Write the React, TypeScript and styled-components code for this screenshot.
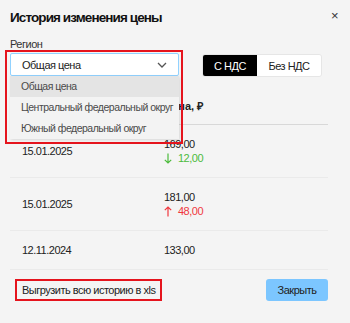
import styled, { createGlobalStyle } from 'styled-components';

const GlobalStyle = createGlobalStyle`
  body {
    margin: 0;
    background: #f4f4f4;
    font-family: "Liberation Sans", Arial, sans-serif;
    letter-spacing: -0.5px;
    color: #222;
  }
`;

const Modal = styled.div`
  width: 350px;
  height: 323px;
  box-sizing: border-box;
  padding: 0 22px 0 10px;
  background: #f4f4f4;
  overflow: hidden;
`;

const Header = styled.div`
  display: flex;
  justify-content: space-between;
  align-items: flex-start;
  margin-right: -10px;
  padding-top: 8px;

  h2 {
    margin: 0;
    font-size: 13.5px;
    letter-spacing: -0.9px;
    line-height: 20px;
    font-weight: 700;
    color: #111;
  }
`;

const CloseIcon = styled.span`
  font-size: 13px;
  line-height: 14px;
  color: #333;
  margin-top: 1px;
`;

const Label = styled.div`
  margin-top: 10px;
  font-size: 11px;
  line-height: 13px;
  color: #333;
`;

const Controls = styled.div`
  display: flex;
  align-items: flex-start;
  margin-top: 2px;
`;

const SelectWrap = styled.div`
  position: relative;
  width: 169px;

  &::after {
    content: '';
    position: absolute;
    left: -5px;
    top: -3px;
    right: -4px;
    bottom: -68px;
    border: 2px solid #e5141d;
    pointer-events: none;
    z-index: 3;
  }
`;

const SelectBox = styled.div`
  height: 23px;
  box-sizing: border-box;
  border: 1px solid #91d2ff;
  border-radius: 2px;
  background: #fff;
  display: flex;
  align-items: center;
  justify-content: space-between;
  padding: 0 11px;
  font-size: 11px;
  color: #222;
`;

const Dropdown = styled.ul`
  position: absolute;
  top: 100%;
  left: 0;
  width: 100%;
  margin: 0;
  padding: 0;
  list-style: none;
  background: #f3f3f3;
  box-shadow: 1px 1px 3px rgba(0, 0, 0, 0.12);
  z-index: 2;
`;

const Option = styled.li<{ $active?: boolean }>`
  height: 21px;
  line-height: 21px;
  padding-left: 11px;
  font-size: 10.5px;
  color: #4a4a4a;
  white-space: nowrap;
  background: ${({ $active }) => ($active ? '#e4e4e4' : 'transparent')};
`;

const Toggle = styled.div`
  display: flex;
  margin-left: 23px;
  margin-top: 1px;
  border-radius: 3px;
  overflow: hidden;
  border: 1px solid #e6e6e6;
`;

const ToggleBtn = styled.div<{ $on?: boolean; $w: number }>`
  width: ${({ $w }) => $w}px;
  height: 21px;
  display: flex;
  align-items: center;
  justify-content: center;
  font-size: 11px;
  background: ${({ $on }) => ($on ? '#000' : '#fff')};
  color: ${({ $on }) => ($on ? '#fff' : '#222')};
`;

const Table = styled.div`
  margin-top: 11px;
`;

const Row = styled.div<{ $head?: boolean }>`
  display: grid;
  grid-template-columns: 154px 1fr;
  align-items: center;
  padding: ${({ $head }) => ($head ? '11px 0' : '12px 0')};
  border-bottom: 1px solid ${({ $head }) => ($head ? '#d8d8d8' : '#eaeaea')};
  font-size: 11px;
  line-height: 14px;
  color: #222;

  > div:first-child {
    padding-left: 12px;
  }
`;

const HeadCell = styled.div`
  font-size: 11px;
  font-weight: 700;
  letter-spacing: 0;
`;

const Delta = styled.div<{ $up?: boolean }>`
  color: ${({ $up }) => ($up ? '#f0383e' : '#4cbb3c')};
  display: flex;
  align-items: center;
  gap: 6px;
`;

const Footer = styled.div`
  display: flex;
  justify-content: space-between;
  margin-top: 9px;
`;

const ExportBtn = styled.div`
  margin-left: 5px;
  height: 22px;
  box-sizing: border-box;
  border: 2px solid #e5141d;
  padding: 0 5px;
  display: flex;
  align-items: center;
  font-size: 11px;
  color: #222;
`;

const CloseBtn = styled.div`
  width: 62px;
  height: 22px;
  border-radius: 3px;
  background: #7cc6ff;
  display: flex;
  align-items: center;
  justify-content: center;
  font-size: 11px;
  color: #222;
`;

const Chevron = () => (
  <svg width="10" height="6" viewBox="0 0 10 6">
    <path d="M1 1l4 4 4-4" fill="none" stroke="#555" strokeWidth="1.3" />
  </svg>
);

const Arrow = ({ up }: { up?: boolean }) => (
  <svg width="8" height="11" viewBox="0 0 8 11">
    {up ? (
      <path d="M4 10.5V1M0.8 4.2L4 1l3.2 3.2" fill="none" stroke="currentColor" strokeWidth="1.2" />
    ) : (
      <path d="M4 0.5V10M0.8 6.8L4 10l3.2-3.2" fill="none" stroke="currentColor" strokeWidth="1.2" />
    )}
  </svg>
);

const rows = [
  { date: '15.01.2025', price: '169,00', delta: '12,00', up: false },
  { date: '15.01.2025', price: '181,00', delta: '48,00', up: true },
  { date: '12.11.2024', price: '133,00' },
];

const App = () => (
  <Modal>
    <GlobalStyle />
    <Header>
      <h2>История изменения цены</h2>
      <CloseIcon>×</CloseIcon>
    </Header>
    <Label>Регион</Label>
    <Controls>
      <SelectWrap>
        <SelectBox>
          <span>Общая цена</span>
          <Chevron />
        </SelectBox>
        <Dropdown>
          <Option $active>Общая цена</Option>
          <Option>Центральный федеральный округ</Option>
          <Option>Южный федеральный округ</Option>
        </Dropdown>
      </SelectWrap>
      <Toggle>
        <ToggleBtn $on $w={54}>С НДС</ToggleBtn>
        <ToggleBtn $w={64}>Без НДС</ToggleBtn>
      </Toggle>
    </Controls>
    <Table>
      <Row $head>
        <HeadCell>Дата</HeadCell>
        <HeadCell>Цена, ₽</HeadCell>
      </Row>
      {rows.map((r, i) => (
        <Row key={i}>
          <div>{r.date}</div>
          <div>
            <div>{r.price}</div>
            {r.delta && (
              <Delta $up={r.up}>
                <Arrow up={r.up} />
                {r.delta}
              </Delta>
            )}
          </div>
        </Row>
      ))}
    </Table>
    <Footer>
      <ExportBtn>Выгрузить всю историю в xls</ExportBtn>
      <CloseBtn>Закрыть</CloseBtn>
    </Footer>
  </Modal>
);

export default App;
